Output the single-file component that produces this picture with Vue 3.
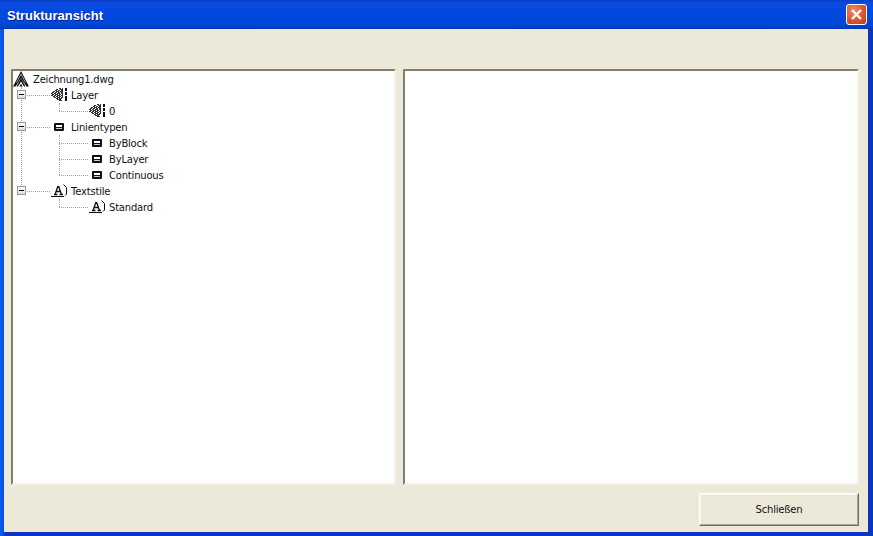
<template>
  <div class="window">
    <header class="titlebar">
      <span class="title">Strukturansicht</span>
      <button class="close" aria-label="Schließen">
        <svg width="15" height="15" viewBox="0 0 15 15">
          <path d="M3 3 L12 12 M12 3 L3 12" stroke="#fff" stroke-width="2.4" fill="none" />
        </svg>
      </button>
    </header>
    <main class="client">
      <div class="panes">
        <div class="pane tree">
          <div v-for="row in rows" :key="row.label + row.level" class="row" :class="'level' + row.level">
            <span v-if="row.level === 1" class="expander"></span>
            <span v-if="row.level > 0" class="hline"></span>
            <span v-if="row.vert" class="vline" :style="{ height: row.vert + 'px' }"></span>
            <span class="icon">
              <svg v-if="row.icon === 'dwg'" width="16" height="16" viewBox="0 0 16 16">
                <path d="M8 0 L0 15.5 H2.5 L8 7 L13.5 15.5 H16 Z" fill="#111" />
                <path d="M8 7 L3.5 15.5 H5 L8 10.5 L11 15.5 H12.5 Z" fill="#111" />
                <path d="M8 12.5 L6.5 15.5 H9.5 Z" fill="#111" />
                <path d="M8 3 L3.5 11.5 M8 3 L12.5 11.5" stroke="#fff" stroke-width="0.6" fill="none" />
              </svg>
              <svg v-else-if="row.icon === 'layer'" width="16" height="16" viewBox="0 0 16 16">
                <g class="dither">
                  <rect x="8" y="1" width="2" height="1" /><rect x="11" y="1" width="1" height="1" />
                  <rect x="5" y="2" width="2" height="1" /><rect x="9" y="2" width="3" height="1" />
                  <rect x="4" y="3" width="2" height="1" /><rect x="7" y="3" width="2" height="1" /><rect x="10" y="3" width="2" height="1" />
                  <rect x="2" y="4" width="2" height="1" /><rect x="5" y="4" width="3" height="1" /><rect x="9" y="4" width="3" height="1" />
                  <rect x="1" y="5" width="2" height="1" /><rect x="4" y="5" width="2" height="1" /><rect x="7" y="5" width="2" height="1" /><rect x="10" y="5" width="2" height="1" />
                  <rect x="0" y="6" width="2" height="1" /><rect x="3" y="6" width="2" height="1" /><rect x="6" y="6" width="3" height="1" /><rect x="10" y="6" width="2" height="1" />
                  <rect x="1" y="7" width="2" height="1" /><rect x="4" y="7" width="3" height="1" /><rect x="8" y="7" width="2" height="1" /><rect x="11" y="7" width="1" height="1" />
                  <rect x="0" y="8" width="2" height="1" /><rect x="3" y="8" width="2" height="1" /><rect x="6" y="8" width="3" height="1" /><rect x="10" y="8" width="2" height="1" />
                  <rect x="2" y="9" width="2" height="1" /><rect x="5" y="9" width="2" height="1" /><rect x="8" y="9" width="2" height="1" /><rect x="11" y="9" width="1" height="1" />
                  <rect x="3" y="10" width="2" height="1" /><rect x="6" y="10" width="3" height="1" /><rect x="10" y="10" width="2" height="1" />
                  <rect x="5" y="11" width="2" height="1" /><rect x="8" y="11" width="3" height="1" />
                  <rect x="6" y="12" width="4" height="1" />
                  <rect x="8" y="13" width="3" height="1" />
                </g>
                <g fill="#111">
                  <rect x="14" y="1" width="2" height="3" /><rect x="14" y="5" width="2" height="3" /><rect x="14" y="9" width="2" height="5" />
                </g>
              </svg>
              <svg v-else-if="row.icon === 'line'" width="16" height="16" viewBox="0 0 16 16">
                <rect x="3" y="4" width="10" height="8" rx="1" fill="#111" />
                <rect x="5" y="6" width="6" height="2" fill="#fff" />
                <rect x="5" y="9" width="6" height="1" fill="#ccc" />
              </svg>
              <svg v-else width="16" height="16" viewBox="0 0 16 16">
                <path d="M0 13.5 H13" stroke="#111" stroke-width="1" fill="none" />
                <path d="M3 11.5 H6.5 M8.5 11.5 H12 M7 3 L4 11.5 M7.5 3 L10.5 11.5 M5.5 8.5 H9.5" stroke="#111" stroke-width="1.3" fill="none" />
                <path d="M12.5 1.5 L15.5 4.5 V11 L14 12.5" stroke="#111" stroke-width="1" fill="none" />
              </svg>
            </span>
            <span class="label">{{ row.label }}</span>
          </div>
        </div>
        <div class="pane"></div>
      </div>
      <footer class="actions">
        <button class="btn">Schließen</button>
      </footer>
    </main>
  </div>
</template>

<script setup>
const rows = [
  { label: 'Zeichnung1.dwg', level: 0, icon: 'dwg', vert: 104 },
  { label: 'Layer', level: 1, icon: 'layer', vert: 8 },
  { label: '0', level: 2, icon: 'layer' },
  { label: 'Linientypen', level: 1, icon: 'line', vert: 40 },
  { label: 'ByBlock', level: 2, icon: 'line' },
  { label: 'ByLayer', level: 2, icon: 'line' },
  { label: 'Continuous', level: 2, icon: 'line' },
  { label: 'Textstile', level: 1, icon: 'text', vert: 8 },
  { label: 'Standard', level: 2, icon: 'text' }
];
</script>

<style>
html, body {
  margin: 0;
  overflow: hidden;
  background: #0831d9;
}
</style>

<style scoped>
.window {
  width: 873px;
  height: 536px;
  display: flex;
  flex-direction: column;
  box-sizing: border-box;
  background: linear-gradient(90deg, #0a5cf0 0, #0a4fe0 4px, #0a36c0 5px, #0a36c0 100%);
  font-family: "DejaVu Sans", Verdana, sans-serif;
  font-size: 10px;
  letter-spacing: -0.2px;
  color: #111;
}

.titlebar {
  height: 29px;
  flex: none;
  display: flex;
  align-items: center;
  justify-content: space-between;
  padding: 0 6px 0 7px;
  box-sizing: border-box;
  background: linear-gradient(180deg, #0a3cc4 0%, #0a4ade 10%, #0049de 50%, #0046d8 85%, #0038b8 100%);
}

.title {
  color: #fff;
  font-family: "Liberation Sans", Arial, sans-serif;
  font-weight: bold;
  font-size: 13px;
  letter-spacing: 0;
  padding-top: 1px;
  text-shadow: 1px 1px 0 #0f1f7f;
}

.close {
  width: 21px;
  height: 21px;
  padding: 0;
  display: flex;
  align-items: center;
  justify-content: center;
  border: 1px solid #fff;
  border-radius: 3px;
  background: radial-gradient(circle at 35% 30%, #ee8d6b, #d9502c 60%, #c03a1a);
}

.client {
  flex: 1;
  display: flex;
  flex-direction: column;
  margin: 0 5px 4px 4px;
  padding: 40px 9px 0 7px;
  background: #ece9d8;
  min-height: 0;
  box-sizing: border-box;
}

.panes {
  height: 416px;
  flex: none;
  display: flex;
  gap: 7px;
}

.pane {
  flex: 1;
  background: #fff;
  border: 2px solid;
  border-color: #808070 #f4f2e8 #f4f2e8 #808070;
  box-sizing: border-box;
}

.tree {
  flex: none;
  width: 385px;
}

.row {
  position: relative;
  height: 16px;
  display: flex;
  align-items: center;
}

.level0 { padding-left: 0; }
.level1 { padding-left: 38px; }
.level2 { padding-left: 76px; }

.icon {
  width: 16px;
  height: 16px;
  flex: none;
}

.icon svg {
  display: block;
}

.dither {
  fill: #333;
}

.label {
  margin-left: 4px;
  white-space: nowrap;
}

.expander {
  position: absolute;
  left: 4px;
  top: 3px;
  width: 9px;
  height: 9px;
  box-sizing: border-box;
  border: 1px solid #919b9c;
  background: linear-gradient(#fff, #e0ddd0);
  z-index: 1;
}

.expander::after {
  content: '';
  position: absolute;
  left: 1px;
  top: 3px;
  width: 5px;
  height: 1px;
  background: #000;
}

.hline {
  position: absolute;
  top: 8px;
  height: 0;
  border-top: 1px dotted #a0a0a0;
}

.level1 .hline { left: 8px; width: 29px; }
.level2 .hline { left: 46px; width: 29px; }

.vline {
  position: absolute;
  top: 16px;
  width: 0;
  border-left: 1px dotted #a0a0a0;
}

.level0 .vline { left: 8px; }
.level1 .vline { left: 46px; }

.actions {
  flex: 1;
  display: flex;
  justify-content: flex-end;
  align-items: flex-start;
  padding-top: 8px;
}

.btn {
  width: 160px;
  height: 33px;
  padding: 0;
  background: #ece9d8;
  border: 1px solid;
  border-color: #fff #716f64 #716f64 #fff;
  box-shadow: inset -1px -1px 0 #aca899, inset 1px 1px 0 #f6f5ee;
  font: inherit;
  letter-spacing: inherit;
  color: #111;
}
</style>
